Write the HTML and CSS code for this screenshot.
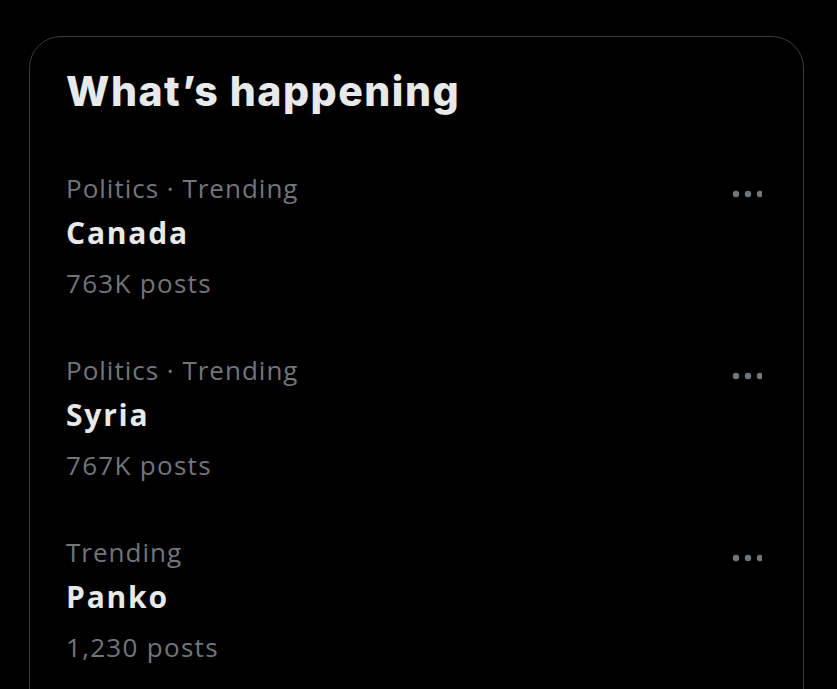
FILE: index.html
```html
<!DOCTYPE html>
<html lang="en">
<head>
    <meta charset="UTF-8">
    <meta name="viewport" content="width=device-width, initial-scale=1.0">
    <title>What's happening</title>
    <link rel="stylesheet" href="styles.css">
</head>
<body>
    <div class="card">
        <h2 class="title">What’s happening</h2>
        <div class="trends">
            <div class="trend">
                <div class="info">
                    <div class="meta">Politics · Trending</div>
                    <div class="name">Canada</div>
                    <div class="count">763K posts</div>
                </div>
                <div class="more">
                    <svg width="30" height="8" viewBox="0 0 30 8"><circle cx="4" cy="4" r="3.2"/><circle cx="16" cy="4" r="3.2"/><circle cx="28" cy="4" r="3.2"/></svg>
                </div>
            </div>
            <div class="trend">
                <div class="info">
                    <div class="meta">Politics · Trending</div>
                    <div class="name">Syria</div>
                    <div class="count">767K posts</div>
                </div>
                <div class="more">
                    <svg width="30" height="8" viewBox="0 0 30 8"><circle cx="4" cy="4" r="3.2"/><circle cx="16" cy="4" r="3.2"/><circle cx="28" cy="4" r="3.2"/></svg>
                </div>
            </div>
            <div class="trend">
                <div class="info">
                    <div class="meta">Trending</div>
                    <div class="name">Panko</div>
                    <div class="count">1,230 posts</div>
                </div>
                <div class="more">
                    <svg width="30" height="8" viewBox="0 0 30 8"><circle cx="4" cy="4" r="3.2"/><circle cx="16" cy="4" r="3.2"/><circle cx="28" cy="4" r="3.2"/></svg>
                </div>
            </div>
        </div>
    </div>
</body>
</html>
```

FILE: styles.css
```css
*{
    padding: 0;
    margin: 0;
    box-sizing: border-box;
}
body{
    background-color: #000;
    font-family: "Open Sans", "Noto Sans", sans-serif;
    overflow: hidden;
}
.card{
    margin: 36px 0 0 29px;
    width: 775px;
    height: 720px;
    border: 1px solid #383b3e;
    border-radius: 32px;
}
.title{
    font-family: Inter, "Noto Sans", sans-serif;
    font-size: 41px;
    font-weight: 800;
    letter-spacing: 1.5px;
    color: #e7e9ea;
    line-height: 56px;
    padding: 26px 36px 0;
}
.trends{
    padding-top: 28px;
}
.trend{
    display: flex;
    justify-content: space-between;
    padding: 23px 41px 23px 36px;
}
.meta{
    font-size: 26px;
    letter-spacing: 1px;
    line-height: 36px;
    color: #71767b;
}
.name{
    font-size: 30px;
    font-weight: 700;
    letter-spacing: 1.8px;
    line-height: 54px;
    color: #e7e9ea;
}
.count{
    font-size: 26px;
    letter-spacing: 1.3px;
    line-height: 46px;
    color: #71767b;
}
.more{
    padding-top: 20px;
}
.more svg{
    display: block;
    fill: #71767b;
}
```
